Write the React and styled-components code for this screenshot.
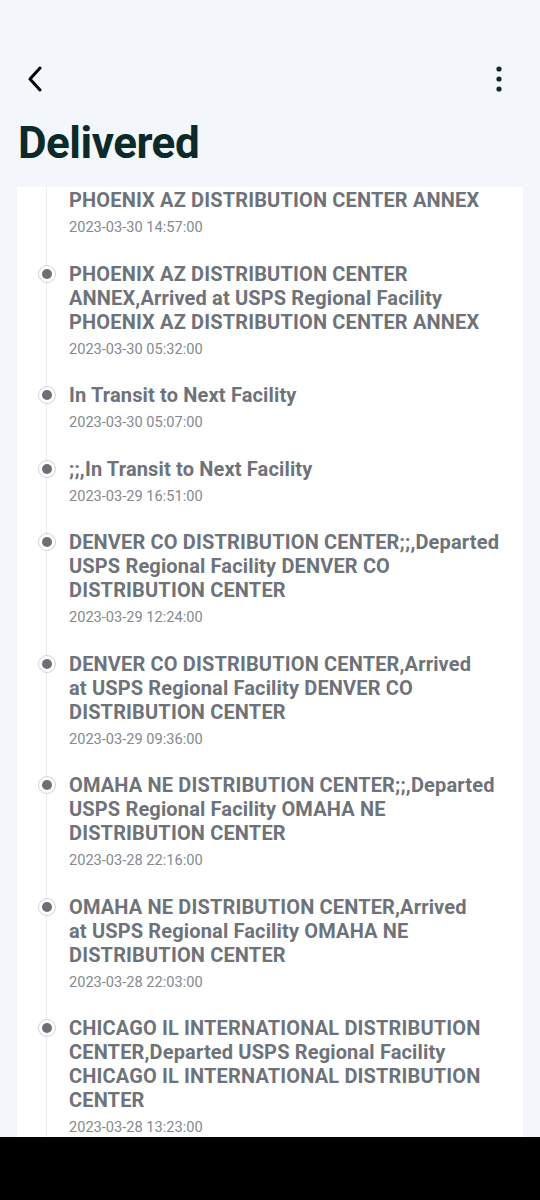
import React, { useLayoutEffect, useRef } from "react";
import styled, { createGlobalStyle } from "styled-components";

const events = [
  {
    title:
      "PHOENIX AZ DISTRIBUTION CENTER ANNEX,Departed USPS Regional Facility PHOENIX AZ DISTRIBUTION CENTER ANNEX",
    time: "2023-03-30 14:57:00",
  },
  {
    title:
      "PHOENIX AZ DISTRIBUTION CENTER ANNEX,Arrived at USPS Regional Facility PHOENIX AZ DISTRIBUTION CENTER ANNEX",
    time: "2023-03-30 05:32:00",
  },
  { title: "In Transit to Next Facility", time: "2023-03-30 05:07:00" },
  { title: ";;,In Transit to Next Facility", time: "2023-03-29 16:51:00" },
  {
    title:
      "DENVER CO DISTRIBUTION CENTER;;,Departed USPS Regional Facility DENVER CO DISTRIBUTION CENTER",
    time: "2023-03-29 12:24:00",
  },
  {
    title:
      "DENVER CO DISTRIBUTION CENTER,Arrived at\u00a0USPS Regional Facility DENVER CO DISTRIBUTION CENTER",
    time: "2023-03-29 09:36:00",
  },
  {
    title:
      "OMAHA NE DISTRIBUTION CENTER;;,Departed USPS Regional Facility OMAHA NE DISTRIBUTION CENTER",
    time: "2023-03-28 22:16:00",
  },
  {
    title:
      "OMAHA NE DISTRIBUTION CENTER,Arrived at\u00a0USPS Regional Facility OMAHA NE DISTRIBUTION CENTER",
    time: "2023-03-28 22:03:00",
  },
  {
    title:
      "CHICAGO IL INTERNATIONAL DISTRIBUTION CENTER,Departed USPS Regional Facility CHICAGO IL INTERNATIONAL DISTRIBUTION CENTER",
    time: "2023-03-28 13:23:00",
  },
  {
    title: "CHICAGO IL INTERNATIONAL DISTRIBUTION CENTER,Processed Through Facility",
    time: "2023-03-28 10:41:00",
  },
];

export default function App() {
  const listRef = useRef(null);

  // the list is shown already scrolled a little, as in the screenshot
  useLayoutEffect(() => {
    if (listRef.current) listRef.current.scrollTop = 63;
  }, []);

  return (
    <>
      <GlobalStyle />
      <Screen>
        <TopBar>
          <IconButton aria-label="back">
            <svg width="16" height="26" viewBox="0 0 16 26">
              <path d="M13 2 L3 13 L13 24" fill="none" stroke="#000" strokeWidth="3" strokeLinecap="round" strokeLinejoin="round" />
            </svg>
          </IconButton>
          <IconButton aria-label="more">
            <svg width="6" height="28" viewBox="0 0 6 28">
              <circle cx="3" cy="4" r="2.6" fill="#0d2b2b" />
              <circle cx="3" cy="14" r="2.6" fill="#0d2b2b" />
              <circle cx="3" cy="24" r="2.6" fill="#0d2b2b" />
            </svg>
          </IconButton>
        </TopBar>
        <Title>Delivered</Title>
        <Card ref={listRef}>
          <Timeline>
            {events.map((ev, i) => (
              <Event key={i}>
                <Dot />
                <EventTitle>{ev.title}</EventTitle>
                <EventTime>{ev.time}</EventTime>
              </Event>
            ))}
          </Timeline>
        </Card>
        <NavBar />
      </Screen>
    </>
  );
}

const GlobalStyle = createGlobalStyle`
  html, body {
    margin: 0;
    padding: 0;
    background: #f3f6fb;
    font-family: Roboto, "Noto Sans", sans-serif;
  }
  * { box-sizing: border-box; }
`;

const Screen = styled.div`
  height: 1200px;
  display: flex;
  flex-direction: column;
  background: #f3f6fb;
  overflow: hidden;
`;

const TopBar = styled.div`
  display: flex;
  justify-content: space-between;
  align-items: center;
  padding: 0 24px 0 18px;
  margin-top: 53px;
  height: 52px;
`;

const IconButton = styled.div`
  width: 34px;
  height: 40px;
  display: flex;
  align-items: center;
  justify-content: center;
`;

const Title = styled.h1`
  margin: 10px 0 0 18px;
  font-size: 44px;
  font-weight: 700;
  line-height: 56px;
  color: #0b2a29;
  letter-spacing: -0.5px;
`;

const Card = styled.div`
  margin: 16px 17px 0 17px;
  flex: 1;
  background: #fff;
  overflow: hidden;
`;

const Timeline = styled.ul`
  list-style: none;
  margin: 0;
  padding: 16px 18px 0 29px;
`;

const Event = styled.li`
  position: relative;
  padding: 0 0 24.5px 22px;
  border-left: 1px solid #ebebeb;

  &:last-child {
    padding-bottom: 40px;
  }
`;

const Dot = styled.span`
  position: absolute;
  left: -9px;
  top: 3px;
  width: 18px;
  height: 18px;
  border-radius: 50%;
  background: #fff;
  border: 1px solid #d2d4d7;
  display: flex;
  align-items: center;
  justify-content: center;

  &::after {
    content: "";
    width: 10px;
    height: 10px;
    border-radius: 50%;
    background: #6b7077;
  }
`;

const EventTitle = styled.div`
  font-size: 20px;
  font-weight: 700;
  line-height: 24px;
  letter-spacing: 0.15px;
  color: #6e737a;
`;

const EventTime = styled.div`
  margin-top: 5px;
  font-size: 14.6px;
  line-height: 20px;
  color: #84898e;
`;

const NavBar = styled.div`
  height: 63px;
  flex-shrink: 0;
  background: #000;
`;
